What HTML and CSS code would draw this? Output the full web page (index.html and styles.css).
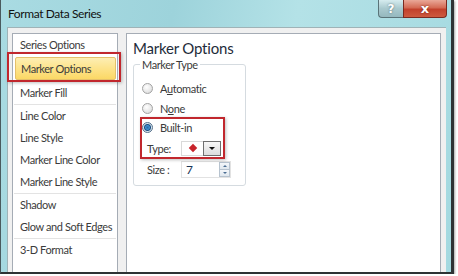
FILE: index.html
```html
<!DOCTYPE html>
<html>

<head>
  <title>Format Data Series</title>
  <link rel="stylesheet" href="styles.css">
</head>

<body>
  <div class="dialog">
    <div class="title-bar">
      <span class="title">Format Data Series</span>
      <div class="caption-buttons">
        <span class="help-btn">?</span>
        <span class="close-btn">x</span>
      </div>
    </div>

    <div class="client">
      <ul class="nav">
        <li>Series Options</li>
        <li class="active">Marker Options<span class="callout"></span></li>
        <li>Marker Fill</li>
        <li class="sep"></li>
        <li>Line Color</li>
        <li>Line Style</li>
        <li>Marker Line Color</li>
        <li>Marker Line Style</li>
        <li class="sep"></li>
        <li>Shadow</li>
        <li>Glow and Soft Edges</li>
        <li class="sep"></li>
        <li>3-D Format</li>
      </ul>

      <div class="pane">
        <h2>Marker Options</h2>
        <fieldset class="group">
          <legend>Marker Type</legend>
          <div class="radio"><span class="bullet"></span><span>A<u>u</u>tomatic</span></div>
          <div class="radio"><span class="bullet"></span><span>N<u>o</u>ne</span></div>
          <div class="builtin">
            <div class="radio"><span class="bullet checked"></span><span>Built-in</span></div>
            <div class="field-row type-row">
              <span class="field-label">Type:</span>
              <span class="picker">
                <span class="swatch"><span class="diamond"></span></span>
                <span class="drop-btn"><span class="arrow"></span></span>
              </span>
            </div>
            <span class="callout"></span>
          </div>
          <div class="field-row size-row">
            <span class="field-label">Size :</span>
            <span class="spin-input">
              <span class="spin-value">7</span>
              <span class="spin-btns">
                <span class="spin up"></span>
                <span class="spin down"></span>
              </span>
            </span>
          </div>
        </fieldset>
      </div>
    </div>
  </div>
</body>

</html>
```

FILE: styles.css
```css
/* Global styles */
body {
  margin: 0;
  background-color: #ffffff;
  font-family: Lato, 'Noto Sans', sans-serif;
  font-size: 11px;
  letter-spacing: -0.4px;
  color: #1e395b;
}

/* Window frame */
.dialog {
  width: 450px;
  height: 272px;
  border-left: 1px solid #4a5a5e;
  border-right: 3px solid #2e3335;
  border-bottom: 2px solid #2e3335;
  background: linear-gradient(100deg, #a9dbe2 0%, #9dd3db 35%, #b4e2e7 60%, #a4d9e0 100%);
  display: flex;
  flex-direction: column;
  box-shadow: 1px 1px 2px rgba(0, 0, 0, 0.35);
}

.title-bar {
  height: 27px;
  display: flex;
  justify-content: space-between;
  align-items: flex-start;
  padding-left: 7px;
  padding-right: 4px;
}

.title {
  margin-top: 6px;
  font-size: 12px;
  color: #111111;
}

.caption-buttons {
  display: flex;
  letter-spacing: 0;
}

.help-btn,
.close-btn {
  height: 17px;
  display: flex;
  align-items: center;
  justify-content: center;
  font-family: 'DejaVu Sans', sans-serif;
  font-weight: bold;
  color: #ffffff;
  border: 1px solid #5a7378;
  border-top: none;
}

.help-btn {
  width: 24px;
  border-right: none;
  border-bottom-left-radius: 4px;
  background: linear-gradient(#d6ecef, #a9c9ce 50%, #95b8be);
  font-size: 12px;
  text-shadow: 0 0 2px #4f6468;
}

.close-btn {
  width: 42px;
  border-color: #7a2a20;
  border-bottom-right-radius: 4px;
  background: linear-gradient(#e9a898, #d46b55 45%, #c2412c 55%, #cd5a3f);
  font-size: 13px;
  text-shadow: 0 0 2px #6a1a10;
}

/* Client area */
.client {
  flex: 1;
  display: flex;
  gap: 8px;
  margin-right: 5px;
  margin-left: 6px;
  padding: 5px 5px 0 4px;
  background-color: #f0f0f0;
  border-top: 1px solid #9fb3b7;
  border-left: 1px solid #9fb3b7;
}

/* Left navigation list */
.nav {
  list-style: none;
  margin: 0;
  padding: 0;
  width: 104px;
  background-color: #ffffff;
  border: 1px solid #a5acb5;
  border-bottom: none;
}

.nav li {
  position: relative;
  height: 22px;
  line-height: 22px;
  padding-left: 7px;
  color: #3b3b3b;
  white-space: nowrap;
}

.nav li.active {
  height: 21px;
  line-height: 21px;
  margin: 1px 1px 2px 2px;
  padding-left: 5px;
  background: linear-gradient(#fdeeb3, #fde38a 50%, #fbd866);
  border: 1px solid #e5c06a;
  border-radius: 2px;
}

.nav li.sep {
  height: 1px;
  margin: 0 1px;
  background-color: #e3e3e3;
}

/* Red annotation boxes */
.callout {
  position: absolute;
  border: 2px solid #c1272d;
  box-shadow: 1px 1px 3px rgba(0, 0, 0, 0.25);
}

.nav .callout {
  left: -9px;
  top: -6px;
  width: 110px;
  height: 26px;
}

/* Right pane */
.pane {
  flex: 1;
  background-color: #ffffff;
  border: 1px solid #a5acb5;
  border-bottom: none;
  padding: 0 6px;
}

.pane h2 {
  margin: 5px 0 0 0;
  font-size: 15px;
  font-weight: normal;
  letter-spacing: -0.2px;
  color: #1e2b3a;
}

.group {
  width: 96px;
  height: 119px;
  margin: 1px 0 0 0;
  padding: 7px 7px 0 8px;
  border: 1px solid #d5dbe0;
  border-radius: 3px;
}

.group legend {
  padding: 0 2px;
  margin-left: -2px;
  color: #3b3b3b;
}

.radio {
  display: flex;
  align-items: center;
  gap: 7px;
  height: 20px;
  color: #3b3b3b;
}

.bullet {
  width: 11px;
  height: 11px;
  border-radius: 50%;
  border: 1px solid #a3a3a3;
  background: radial-gradient(circle at 40% 35%, #ffffff, #e6e6e6 60%, #cfcfcf);
  box-sizing: border-box;
}

.bullet.checked {
  border-color: #55708a;
  background: radial-gradient(circle, #2a6aa8 0, #3f8fcf 2px, #1d4f80 3px, #d9e5ef 4px, #c4d3de);
}

.builtin {
  position: relative;
  margin-top: -1px;
}

.builtin .callout {
  left: -2px;
  top: 0;
  width: 81px;
  height: 38px;
}

.field-row {
  display: flex;
  align-items: center;
  height: 20px;
  padding-left: 5px;
  color: #3b3b3b;
}

.type-row {
  height: 22px;
}

.field-label {
  width: 34px;
}

.picker {
  display: flex;
  height: 15px;
}

.swatch {
  width: 21px;
  display: flex;
  align-items: center;
  justify-content: center;
  background-color: #ffffff;
  border: 1px solid #d9d9d9;
  border-right: none;
}

.diamond {
  width: 6px;
  height: 6px;
  background-color: #c8242b;
  transform: rotate(45deg);
}

.drop-btn {
  width: 18px;
  display: flex;
  align-items: center;
  justify-content: center;
  background: linear-gradient(#f7f7f7, #dcdcdc);
  border: 1px solid #6f6f6f;
  box-sizing: border-box;
}

.arrow {
  width: 0;
  height: 0;
  border-left: 3px solid transparent;
  border-right: 3px solid transparent;
  border-top: 3px solid #111111;
}

.spin-input {
  display: flex;
  height: 17px;
  width: 50px;
  border: 1px solid #e2e2e2;
  box-sizing: border-box;
}

.spin-value {
  flex: 1;
  padding-left: 4px;
  font-size: 12px;
  line-height: 15px;
  color: #1a3556;
}

.spin-btns {
  width: 11px;
  display: flex;
  flex-direction: column;
}

.spin {
  flex: 1;
  display: flex;
  align-items: center;
  justify-content: center;
  background: linear-gradient(#f4f7fa, #dfe7ee);
  border: 1px solid #b7c3cf;
}

.spin.up {
  border-bottom: none;
}

.spin::after {
  content: '';
  border-left: 2px solid transparent;
  border-right: 2px solid transparent;
}

.spin.up::after {
  border-bottom: 2px solid #4a6d92;
}

.spin.down::after {
  border-top: 2px solid #4a6d92;
}
```
